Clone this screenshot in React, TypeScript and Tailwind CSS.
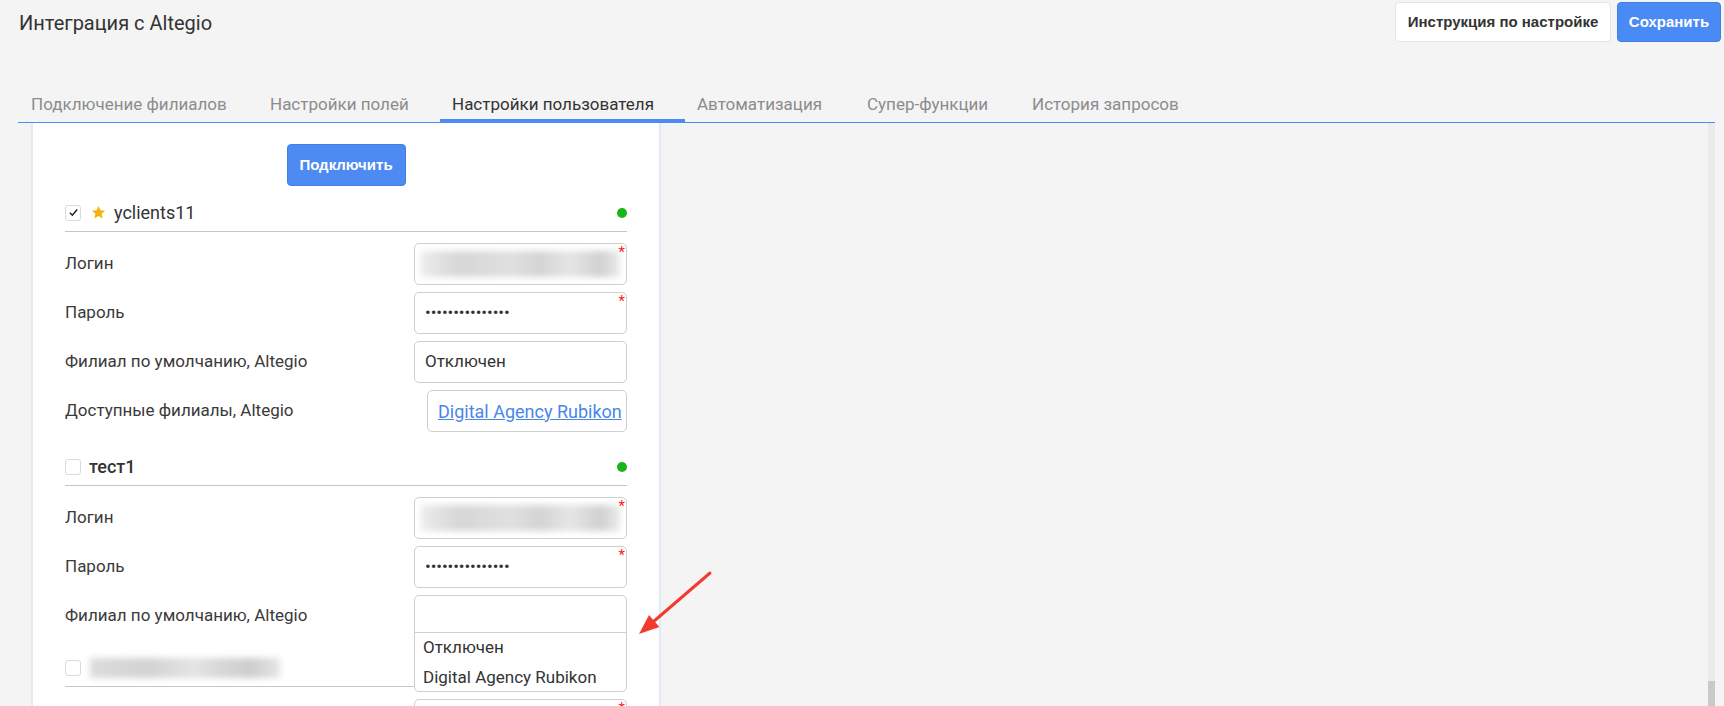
import { Fragment } from "react";

const tabs = [
  { label: "Подключение филиалов", w: "w-[239px]" },
  { label: "Настройки полей", w: "w-[182px]" },
  { label: "Настройки пользователя", w: "w-[245px]", active: true },
  { label: "Автоматизация", w: "w-[170px]" },
  { label: "Супер-функции", w: "w-[165px]" },
  { label: "История запросов", w: "w-[200px]" },
];

const Asterisk = () => (
  <span className="absolute right-[1px] top-[1px] text-[15px] leading-none text-[#ff1a1a]">*</span>
);

const Blurred = () => (
  <div className="absolute inset-x-[6px] inset-y-[7px] bg-[linear-gradient(90deg,#ececec_0%,#d6d6d6_20%,#e0e0e0_45%,#d4d4d4_60%,#e6e6e6_75%,#d0d0d0_90%,#ebebeb_100%)] blur-[3px]" />
);

const Checkbox = ({ checked }: { checked?: boolean }) => (
  <div className="flex h-[16px] w-[16px] items-center justify-center rounded-[3px] border border-[#dadada] bg-white">
    {checked && (
      <svg width="11" height="11" viewBox="0 0 12 12">
        <path d="M2 6.3 L4.8 9 L10 2.8" fill="none" stroke="#222" strokeWidth="1.6" />
      </svg>
    )}
  </div>
);

const Field = ({
  label,
  children,
  wide = true,
}: {
  label: string;
  children: React.ReactNode;
  wide?: boolean;
}) => (
  <div className="flex h-[42px] items-center justify-between">
    <span className="text-[17px] text-[#3a3a3a]">{label}</span>
    <div
      className={
        wide
          ? "relative flex h-[42px] w-[213px] items-center rounded-[5px] border border-[#cfcfcf] bg-white pl-[10px]"
          : "relative flex h-[42px] w-[200px] items-center rounded-[5px] border border-[#cfcfcf] bg-white pl-[10px]"
      }
    >
      {children}
    </div>
  </div>
);

const Dots = () => (
  <span className="text-[17px] tracking-[-0.1px] text-[#333]">•••••••••••••••</span>
);

const AccountHeader = ({
  name,
  checked,
  star,
  blurred,
}: {
  name?: string;
  checked?: boolean;
  star?: boolean;
  blurred?: boolean;
}) => (
  <div className="flex h-[38px] items-center border-b border-[#c6c6c6]">
    <Checkbox checked={checked} />
    {star && (
      <svg className="ml-[10px]" width="15" height="15" viewBox="0 0 24 24">
        <path
          d="M12 1.5l3.1 6.9 7.4.7-5.6 5 1.7 7.4L12 17.6 5.4 21.5l1.7-7.4-5.6-5 7.4-.7z"
          fill="#f5b20a"
        />
      </svg>
    )}
    {name && (
      <span className={star ? "ml-[8px] text-[18px] text-[#333]" : "ml-[8px] text-[18px] font-medium text-[#333]"}>
        {name}
      </span>
    )}
    {blurred && (
      <div className="relative ml-[6px] h-[26px] w-[196px]">
        <div className="absolute inset-[3px] bg-[linear-gradient(90deg,#dcdcdc_0%,#d2d2d2_30%,#e4e4e4_55%,#d6d6d6_70%,#cdcdcd_85%,#e6e6e6_100%)] blur-[3px]" />
      </div>
    )}
    {!blurred && <div className="ml-auto h-[10px] w-[10px] rounded-full bg-[#1cb41c]" />}
  </div>
);

export default function App() {
  return (
    <div className="relative h-[706px] w-[1724px] overflow-hidden bg-[#f4f4f4] font-['Roboto',sans-serif]">
      <div className="flex h-[88px] items-start justify-between">
        <h1 className="pl-[19px] pt-[11px] text-[20px] leading-[24px] text-[#333]">Интеграция с Altegio</h1>
        <div className="flex gap-[6px] pr-[3px] pt-[2px] font-['Liberation_Sans',Arial,sans-serif] text-[15px] font-bold">
          <button className="h-[40px] w-[216px] rounded-[4px] border border-[#e4e4e4] bg-white text-[#333]">
            Инструкция по настройке
          </button>
          <button className="h-[40px] w-[104px] rounded-[4px] border border-[#3f7fe6] bg-[#4a8af4] text-white">
            Сохранить
          </button>
        </div>
      </div>

      <div className="ml-[18px] flex h-[35px] w-[1697px] border-b border-[#4c8bf5] pl-[1px]">
        {tabs.map((t) => (
          <div
            key={t.label}
            className={
              t.active
                ? `${t.w} flex items-center border-b-[3px] border-[#4c8bf5] pl-[12px] pt-[3px] text-[17px] text-[#333]`
                : `${t.w} flex items-center pl-[12px] text-[17px] text-[#8c8c8c]`
            }
          >
            {t.label}
          </div>
        ))}
      </div>

      <div className="flex h-[583px]">
        <div className="relative ml-[31px] w-[630px] border-x-[2px] border-[#e3eaf6] bg-white px-[32px]">
          <div className="flex justify-center pt-[21px]">
            <button className="h-[42px] w-[119px] rounded-[4px] border border-[#3f7fe6] bg-[#4d8bf3] font-['Liberation_Sans',Arial,sans-serif] text-[15px] font-bold text-white">
              Подключить
            </button>
          </div>

          <div className="mt-[8px]">
            <AccountHeader name="yclients11" checked star />
            <div className="mt-[11px] flex flex-col gap-[7px]">
              <Field label="Логин">
                <Blurred />
                <Asterisk />
              </Field>
              <Field label="Пароль">
                <Dots />
                <Asterisk />
              </Field>
              <Field label="Филиал по умолчанию, Altegio">
                <span className="text-[17px] text-[#333]">Отключен</span>
              </Field>
              <Field label="Доступные филиалы, Altegio" wide={false}>
                <span className="text-[18px] text-[#4a86e8] underline">Digital Agency Rubikon</span>
              </Field>
            </div>
          </div>

          <div className="mt-[16px]">
            <AccountHeader name="тест1" />
            <div className="mt-[11px] flex flex-col gap-[7px]">
              <Field label="Логин">
                <Blurred />
                <Asterisk />
              </Field>
              <Field label="Пароль">
                <Dots />
                <Asterisk />
              </Field>
              <div className="relative">
                <Field label="Филиал по умолчанию, Altegio">
                  <Fragment />
                </Field>
                <div className="absolute right-0 top-[37px] z-10 flex h-[60px] w-[213px] flex-col justify-center rounded-b-[5px] border border-[#cfcfcf] bg-white pl-[8px] text-[17px] text-[#333]">
                  <div className="leading-[30px]">Отключен</div>
                  <div className="leading-[30px]">Digital Agency Rubikon</div>
                </div>
              </div>
            </div>
          </div>

          <div className="mt-[12px]">
            <AccountHeader blurred />
            <div className="mt-[12px] flex flex-col gap-[7px]">
              <Field label="Логин">
                <Asterisk />
              </Field>
            </div>
          </div>
        </div>

        <div className="ml-auto mr-[9px] flex w-[7px] flex-col bg-[#ebebeb]">
          <div className="mt-auto h-[25px] bg-[#c9c9c9]" />
        </div>
      </div>

      <svg
        className="absolute left-[630px] top-[565px]"
        width="90"
        height="80"
        viewBox="0 0 90 80"
      >
        <line x1="80" y1="8" x2="23" y2="57" stroke="#f23b2e" strokeWidth="3" strokeLinecap="round" />
        <polygon points="9,69 29.4,62.1 19,49.9" fill="#f23b2e" />
      </svg>
    </div>
  );
}
